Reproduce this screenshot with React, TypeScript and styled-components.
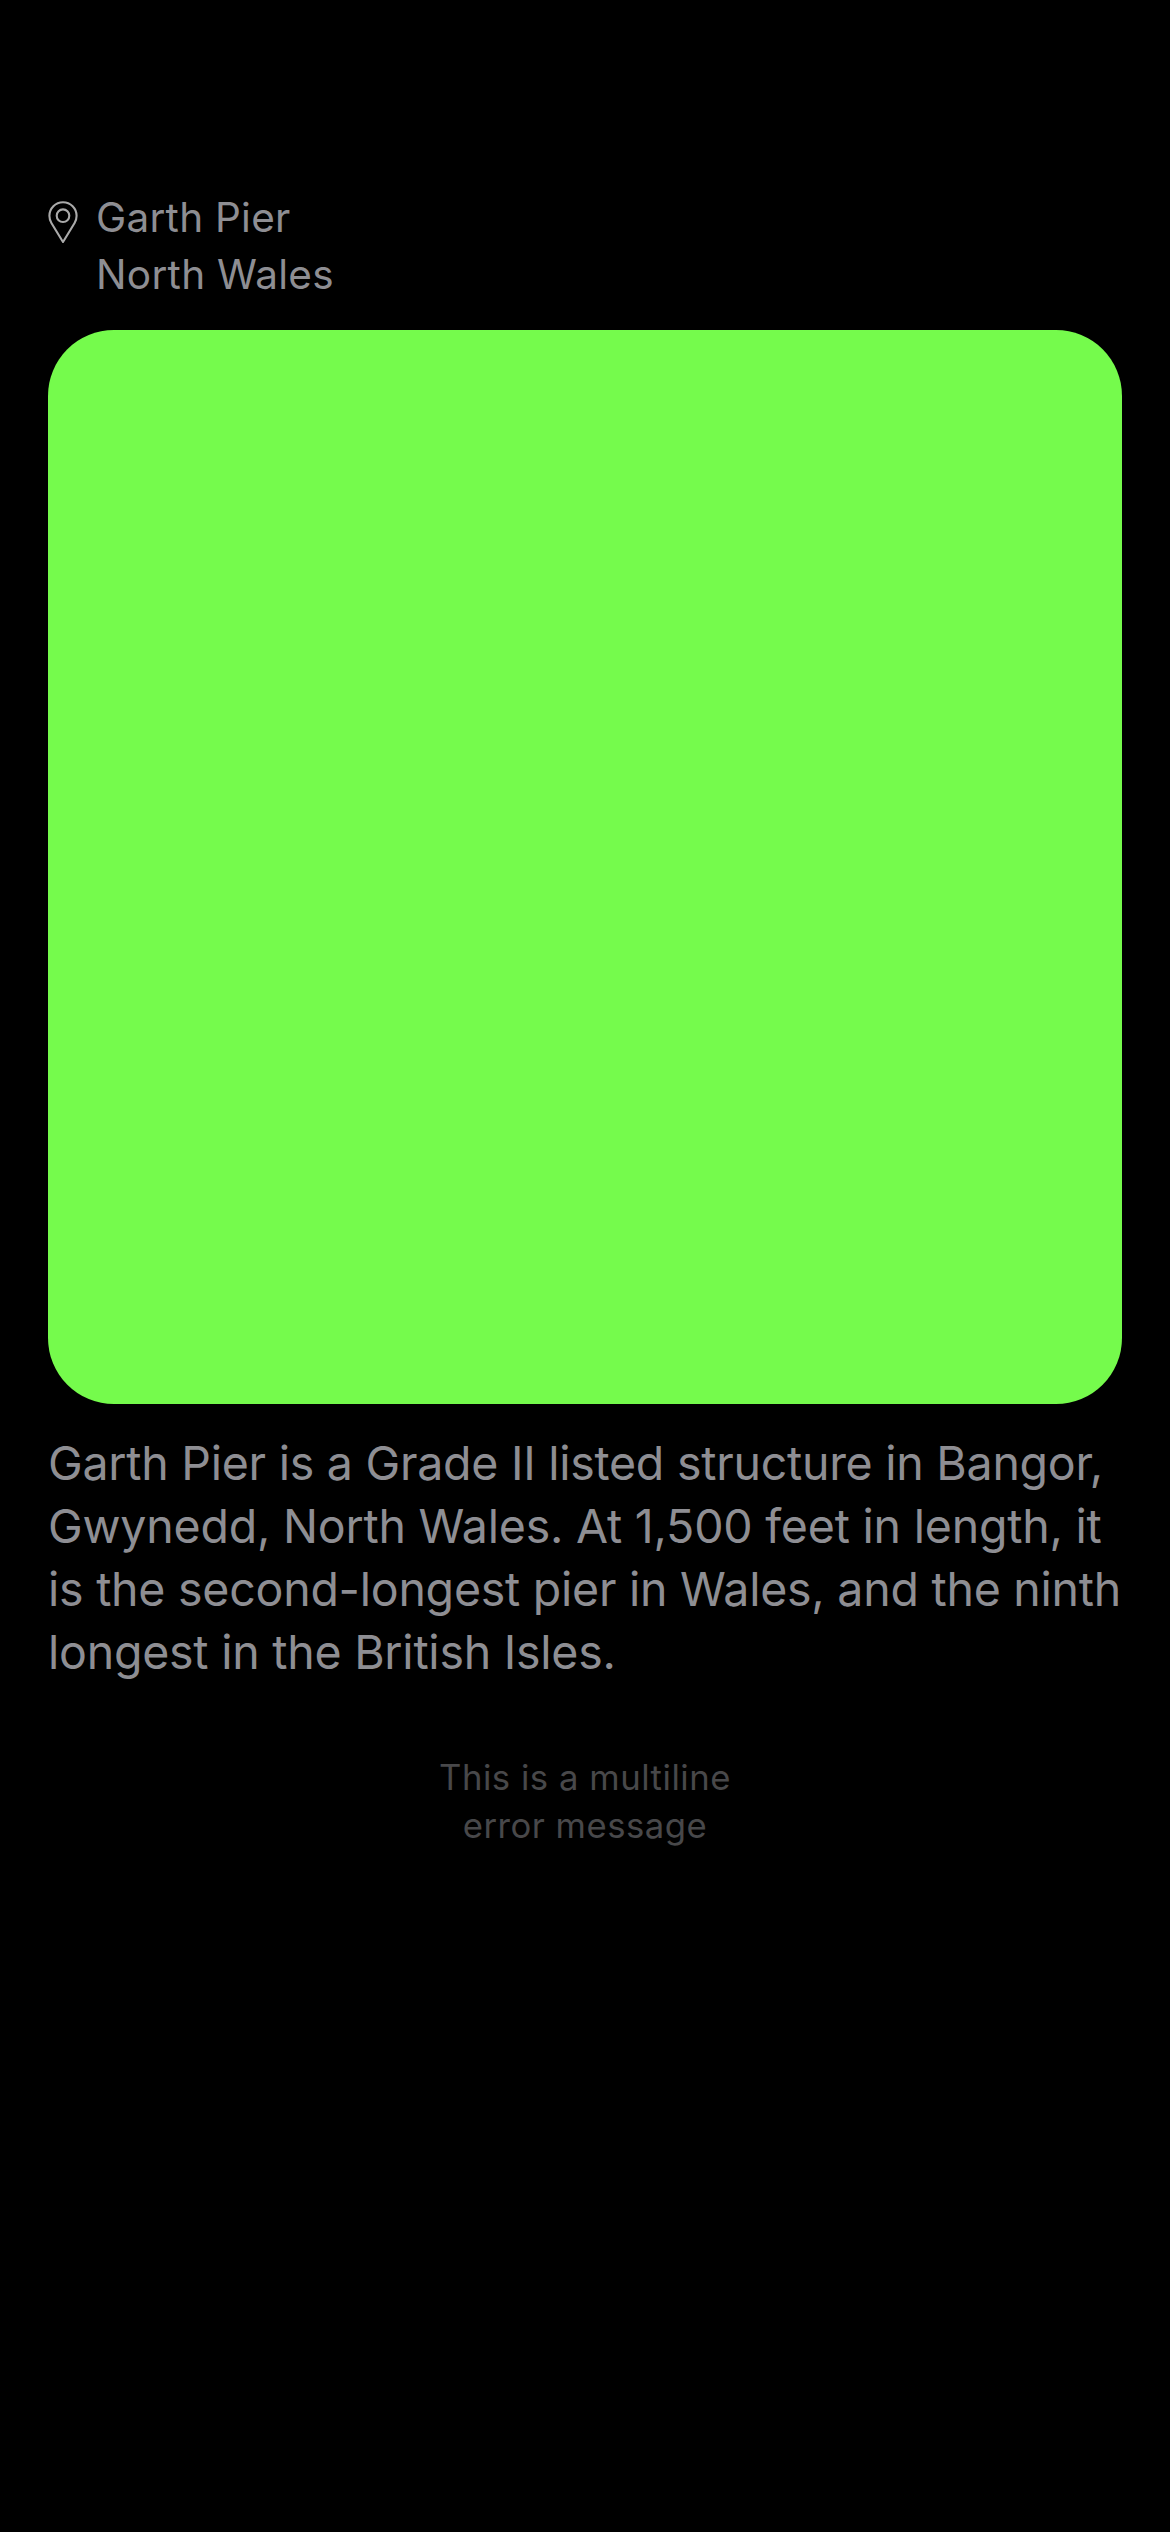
import React from 'react';
import styled, { createGlobalStyle } from 'styled-components';

const GlobalStyle = createGlobalStyle`
  html, body {
    margin: 0;
    background: #000;
  }
`;

const Screen = styled.main`
  box-sizing: border-box;
  min-height: 2532px;
  padding: 189px 48px 0;
  display: flex;
  flex-direction: column;
  background: #000;
  color: #8e8e93;
  font-family: Inter, 'Liberation Sans', sans-serif;
`;

const Header = styled.header`
  display: flex;
  align-items: flex-start;
  gap: 18px;
  height: 141px;
`;

const PinIcon = styled.svg`
  width: 30px;
  height: 43px;
  margin-top: 12px;
  flex: none;
`;

const Place = styled.div`
  font-size: 40.5px;
  line-height: 57px;
`;

const Line = styled.span<{ $tracking: number }>`
  display: block;
  white-space: nowrap;
  letter-spacing: ${(p) => p.$tracking}px;
`;

const Photo = styled.div`
  height: 1074px;
  border-radius: 66px;
  background: #75fb4c;
`;

const Description = styled.p`
  margin: 28px 0 0;
  font-size: 46.5px;
  line-height: 63px;
`;

const ErrorMessage = styled.p`
  margin: 69px 0 0;
  color: #48484a;
  font-size: 34.7px;
  line-height: 48px;
  text-align: center;
`;

interface TextLine {
  text: string;
  tracking: number;
}

const placeLines: TextLine[] = [
  { text: 'Garth Pier', tracking: 0.26 },
  { text: 'North Wales', tracking: 0.3 },
];

const descriptionLines: TextLine[] = [
  { text: 'Garth Pier is a Grade II listed structure in Bangor,', tracking: -0.255 },
  { text: 'Gwynedd, North Wales. At 1,500 feet in length, it', tracking: -0.215 },
  { text: 'is the second-longest pier in Wales, and the ninth', tracking: -0.248 },
  { text: 'longest in the British Isles.', tracking: -0.24 },
];

const errorLines: TextLine[] = [
  { text: 'This is a multiline', tracking: 0.52 },
  { text: 'error message', tracking: 0.48 },
];

const Lines = ({ items }: { items: TextLine[] }) => (
  <>
    {items.map(({ text, tracking }) => (
      <Line key={text} $tracking={tracking}>
        {text}
      </Line>
    ))}
  </>
);

export default function App() {
  return (
    <>
      <GlobalStyle />
      <Screen>
        <Header>
          <PinIcon
            viewBox="0 0 30 43"
            fill="none"
            stroke="#aaaaaa"
            strokeWidth="2.1"
            strokeLinejoin="round"
          >
            <path d="M15 41 L3.4 22 C2 19.6 1.4 17.2 1.4 14.8 C1.4 7.3 7.4 1.2 15 1.2 C22.6 1.2 28.6 7.3 28.6 14.8 C28.6 17.2 28 19.6 26.6 22 Z" />
            <circle cx="15" cy="14.7" r="6.3" />
          </PinIcon>
          <Place>
            <Lines items={placeLines} />
          </Place>
        </Header>
        <Photo />
        <Description>
          <Lines items={descriptionLines} />
        </Description>
        <ErrorMessage>
          <Lines items={errorLines} />
        </ErrorMessage>
      </Screen>
    </>
  );
}
